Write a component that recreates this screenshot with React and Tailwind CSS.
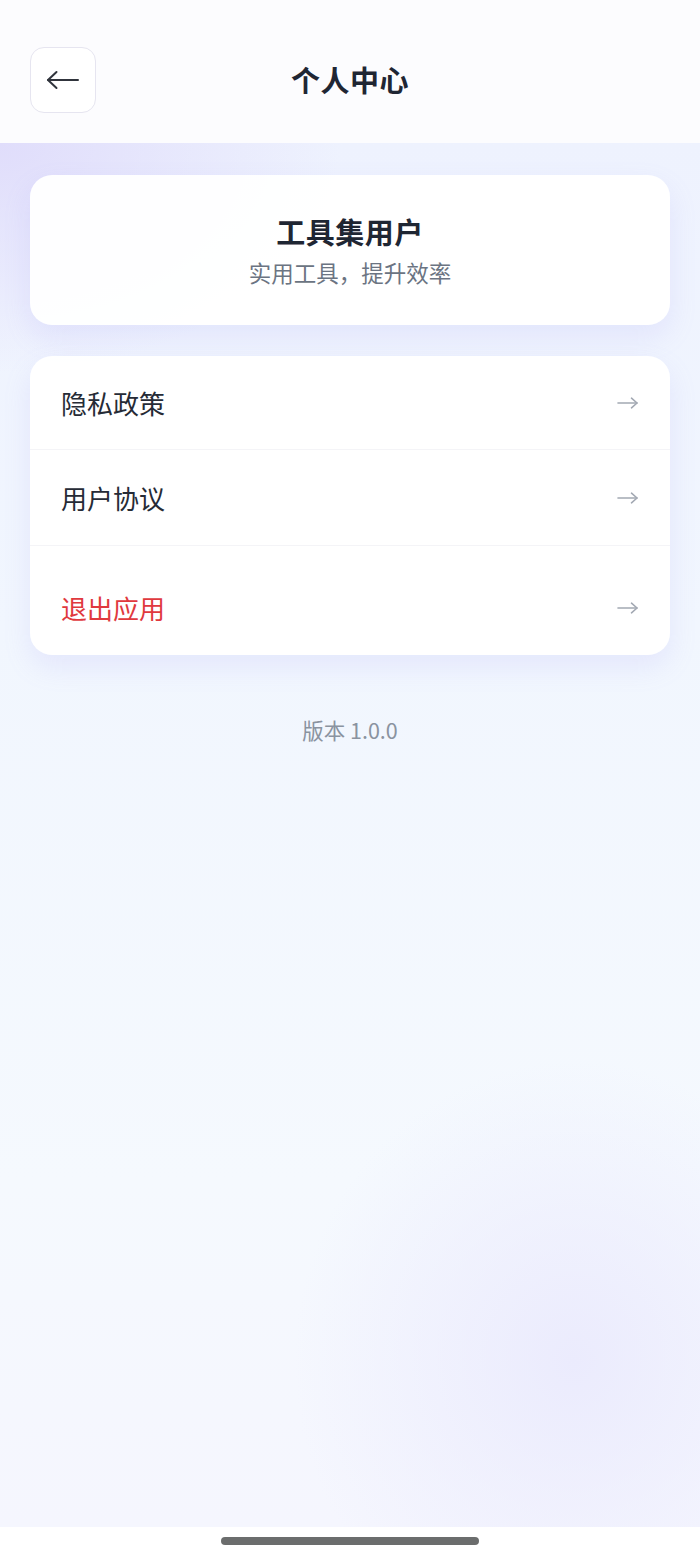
import React from "react";

function RightArrow() {
  return (
    <svg width="24" height="14" viewBox="0 0 24 14" fill="none" stroke="#a3a9b3" strokeWidth="1.6" strokeLinecap="round" strokeLinejoin="round">
      <path d="M2 7H21" />
      <path d="M15.5 2.2L21 7L15.5 11.8" />
    </svg>
  );
}

function Row({ label, red, className }) {
  return (
    <div className={"flex items-center justify-between pl-[31px] pr-[30px] " + className}>
      <span className={"text-[26px] leading-[34px] " + (red ? "text-[#e0393e]" : "text-[#262b36]")}>{label}</span>
      <RightArrow />
    </div>
  );
}

export default function App() {
  return (
    <div
      className="w-[700px] h-[1555px] flex flex-col overflow-hidden bg-white"
      style={{ fontFamily: '"Noto Sans CJK SC", "Noto Sans", sans-serif' }}
    >
      <header className="h-[143px] shrink-0 bg-[#fcfcfe] flex items-start pt-[47px] px-[30px] relative">
        <button className="w-[66px] h-[66px] rounded-[14px] border border-[#e6e5f0] bg-white flex items-center justify-center">
          <svg width="34" height="20" viewBox="0 0 34 20" fill="none" stroke="#30343c" strokeWidth="2" strokeLinecap="round" strokeLinejoin="round">
            <path d="M2 10H32" />
            <path d="M10.5 2L2 10L10.5 18" />
          </svg>
        </button>
        <div className="absolute left-0 right-0 top-[47px] h-[66px] flex items-center justify-center pointer-events-none">
          <span className="text-[29px] font-bold text-[#1f2633] tracking-[0.5px]">个人中心</span>
        </div>
      </header>

      <main className="flex-1 px-[30px] pt-[32px] bg-[radial-gradient(ellipse_340px_230px_at_0%_0%,#e0ddfb_0%,rgba(224,221,251,0)_100%),radial-gradient(ellipse_280px_300px_at_82%_88%,#ebebfd_0%,rgba(235,235,253,0)_100%),linear-gradient(180deg,#eef2fe_0%,#f1f6fe_35%,#f5f9fe_75%,#f5f6fe_100%)]">
        <section className="h-[150px] rounded-[22px] bg-white/95 shadow-[0_12px_28px_rgba(150,145,240,0.14)] flex flex-col items-center justify-center">
          <div className="text-[29px] leading-[36px] font-bold text-[#1f2633] tracking-[0.5px]">工具集用户</div>
          <div className="mt-[8px] text-[22.5px] leading-[30px] text-[#6b7482]">实用工具，提升效率</div>
        </section>

        <section className="mt-[31px] rounded-[22px] bg-white/95 shadow-[0_12px_28px_rgba(150,145,240,0.14)] flex flex-col overflow-hidden">
          <Row label="隐私政策" className="h-[94px] border-b border-[#f4f4f7]" />
          <Row label="用户协议" className="h-[96px] border-b border-[#f4f4f7]" />
          <Row label="退出应用" red className="h-[109px] pt-[15px]" />
        </section>

        <div className="mt-[61px] text-center text-[21.5px] leading-[28px] text-[#8a93a0]">版本 1.0.0</div>
      </main>

      <footer className="h-[28px] shrink-0 bg-white flex justify-center pt-[10px]">
        <div className="w-[258px] h-[8px] rounded-full bg-[#6b6d6d]" />
      </footer>
    </div>
  );
}
